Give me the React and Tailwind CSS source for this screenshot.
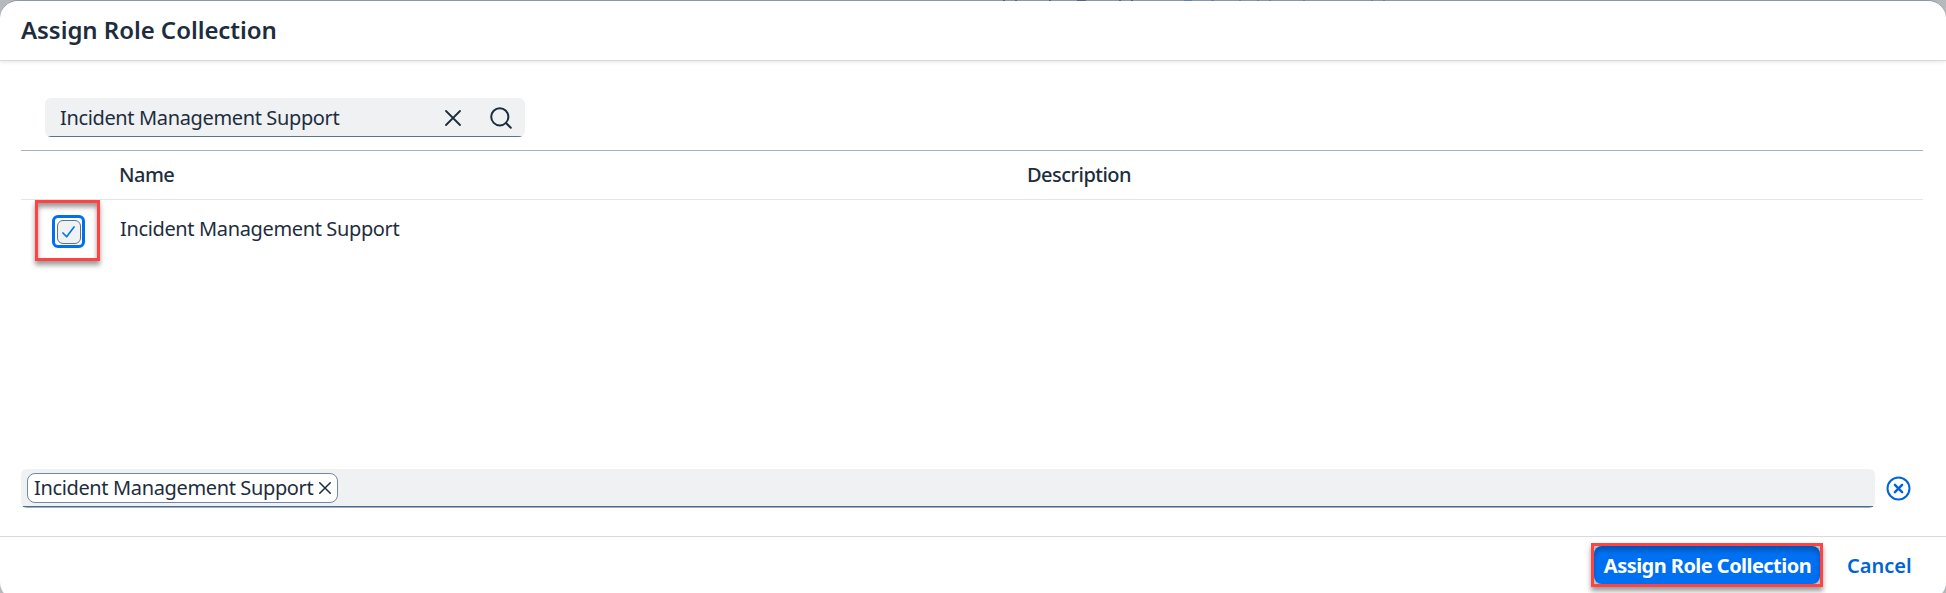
const ROLE = "Incident Management Support";

function Cross({ className, width = 1.8 }) {
  return (
    <svg className={className} viewBox="0 0 16 16" fill="none" stroke="currentColor" strokeWidth={width} strokeLinecap="round">
      <path d="M1 1 15 15M15 1 1 15" />
    </svg>
  );
}

function SearchField() {
  return (
    <div className="mt-[37px] ml-[45px] flex h-[39px] w-[480px] items-center overflow-hidden rounded-md bg-[linear-gradient(to_top,#5b738b_1px,#eff1f2_1px)] pl-[15px]">
      <span className="w-[385px] text-[20px] tracking-[-0.36px]">{ROLE}</span>
      <Cross className="h-4 w-4" />
      <svg className="ml-[29px] h-[22px] w-[22px]" viewBox="0 0 22 22" fill="none" stroke="currentColor" strokeWidth="2" strokeLinecap="round">
        <circle cx="9.8" cy="9.8" r="8.6" />
        <path d="m16 16 4.8 4.8" />
      </svg>
    </div>
  );
}

function RoleTable() {
  return (
    <div className="mr-[23px] ml-[21px] mt-[13px] h-[319px] border-t border-[#a8b2bd]">
      <div className="flex h-[49px] items-center border-b border-[#e5e5e5] pl-[98px] text-[20px] font-medium tracking-[-0.52px]">
        <span className="w-[908px]">Name</span>
        <span>Description</span>
      </div>
      <div className="flex items-start pl-[14px]">
        <div className="flex h-[61px] w-[65px] items-center justify-center border-[3px] border-[#ff4343] pt-[2px] pl-[2px] shadow-[0_4px_5px_rgba(0,0,0,0.4),inset_0_4px_5px_rgba(0,0,0,0.4)]">
          <div className="flex h-[33px] w-[33px] items-center justify-center rounded-md border-[3px] border-[#0070f2] bg-white">
            <div className="flex h-6 w-6 shrink-0 items-center justify-center rounded-[6px] border border-[#5b738b] bg-[#eff1f2]">
              <svg className="h-[12px] w-[13px]" viewBox="0 0 14 13" fill="none" stroke="#0070f2" strokeWidth="1.7" strokeLinecap="round" strokeLinejoin="round">
                <path d="m1 7.5 4 4.2L13 1" />
              </svg>
            </div>
          </div>
        </div>
        <span className="mt-[14px] ml-5 text-[20px] tracking-[-0.36px]">{ROLE}</span>
      </div>
    </div>
  );
}

function SelectedRoles() {
  return (
    <div className="flex items-center pl-[21px]">
      <div className="flex h-[39px] w-[1854px] items-start overflow-hidden rounded-md bg-[linear-gradient(to_top,#a0afbf_1px,#4f6c8c_1px,#4f6c8c_2px,#eff1f2_2px)] pt-1 pl-[6px]">
        <div className="flex h-[30px] w-[311px] items-center rounded-lg border border-[#7089a6] bg-white pl-[6px]">
          <span className="w-[285px] text-[20px] tracking-[-0.36px] whitespace-nowrap">{ROLE}</span>
          <Cross className="h-3 w-3" width={2} />
        </div>
      </div>
      <svg className="ml-[11px] h-[25px] w-[25px]" viewBox="0 0 25 25" fill="none" stroke="#0064d9" strokeWidth="2">
        <circle cx="12.5" cy="12.5" r="11" />
        <path d="m8.9 8.9 7.2 7.2m0-7.2-7.2 7.2" strokeWidth="2.5" strokeLinecap="round" />
      </svg>
    </div>
  );
}

// Bottom edge of the dimmed page that shows above the dialog.
function BackdropEdge() {
  return (
    <svg className="absolute top-0 left-[980px] h-px w-[420px]" viewBox="0 0 420 1">
      <path fill="#566279" d="M23 0h2v1h-2zM35 0h2v1h-2zM69 0h2v1h-2zM97 0h9v1h-9zM139 0h2v1h-2zM151 0h2v1h-2z" />
      <path fill="#6480ac" d="M204 0h8v1h-8zM231 0h3v1h-3zM259 0h2v1h-2zM277 0h2v1h-2zM289 0h2v1h-2zM323 0h2v1h-2zM391 0h2v1h-2zM403 0h2v1h-2z" />
    </svg>
  );
}

export default function App() {
  return (
    <div className="relative h-[593px] overflow-hidden bg-[#b5b9bc] font-['Noto_Sans',sans-serif] text-[#1d2d3e]">
      <div className="h-[600px] w-full overflow-hidden rounded-[18px] border-t border-[#8c98a5] bg-white">
        <header className="flex h-[60px] items-center border-b border-[#d9d9d9] pb-[2px] pl-[21px] shadow-[0_1px_4px_rgba(0,0,0,0.1)]">
          <h1 className="text-[24px] font-semibold tracking-[-0.05px]">Assign Role Collection</h1>
        </header>
        <SearchField />
        <RoleTable />
        <SelectedRoles />
        <footer className="mt-[28px] flex h-16 items-start border-t border-[#d9d9d9] pt-[6px] pl-[1591px]">
          <div className="h-11 w-[232px] border-[3px] border-[#ff4343] bg-[#bcbcbc] shadow-[0_4px_5px_rgba(0,0,0,0.4)]">
            <button className="flex h-full w-full items-center justify-center rounded-lg bg-[#0070f2] pt-[2px] pl-[1px] text-[20px] font-bold tracking-[-0.54px] whitespace-nowrap text-white shadow-[inset_0_4px_5px_rgba(0,0,0,0.25)]">
              Assign Role Collection
            </button>
          </div>
          <button className="ml-6 h-11 pt-[2px] text-[20px] font-semibold text-[#0064d9]">Cancel</button>
        </footer>
      </div>
      <BackdropEdge />
    </div>
  );
}
